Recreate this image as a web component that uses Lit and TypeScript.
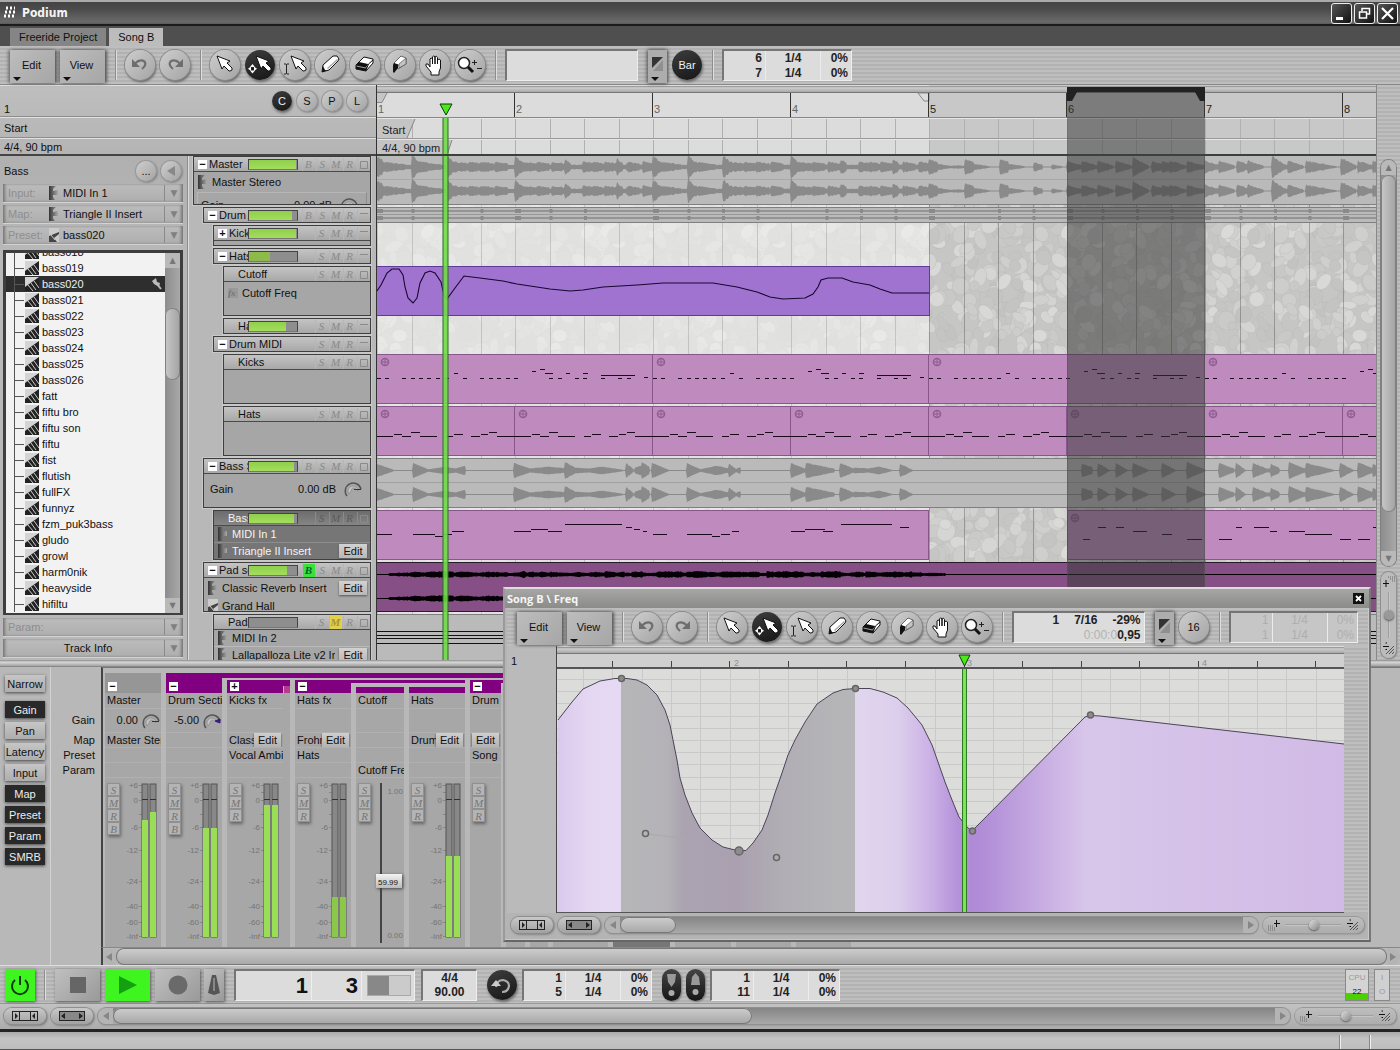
import { LitElement, html, css, svg, nothing } from "lit";
import { customElement, property } from "lit/decorators.js";
import { classMap } from "lit/directives/class-map.js";

const shared = css`
  * { box-sizing: border-box; }
  :host {
    font-family: "Liberation Sans", Arial, sans-serif;
    font-size: 11px;
    line-height: 14px;
    color: #101010;
    cursor: default;
  }
  button, select, input { font: inherit; color: inherit; margin: 0; padding: 0; border: 0; background: none; border-radius: 0; }
  svg { display: block; }
  .brushed { background: repeating-linear-gradient(180deg, #bebebe 0 2px, #b2b2b2 2px 4px); }
  .round {
    flex: none; width: 30px; height: 30px; border-radius: 50%;
    background: linear-gradient(135deg, #cecece, #a4a4a4);
    box-shadow: 0 0 0 1px #8a8a8a, 1px 2px 3px #555;
    display: flex; align-items: center; justify-content: center;
  }
  .round.small { width: 20px; height: 20px; box-shadow: 0 0 0 1px #999, 1px 1px 3px #555; }
  .round.dark { background: linear-gradient(160deg, #3d3d3d, #161616); color: #f2f2f2; box-shadow: 1px 2px 3px #666; }
  .lcd {
    display: grid; background: #dcdcdc; border: 1px solid #eee;
    border-top: 2px solid #757575; border-left: 2px solid #757575;
    font-weight: bold; font-size: 12px; line-height: 14px; color: #222;
  }
`;

const noise = (seed: number) => {
  let s = seed;
  return () => {
    s = (s * 16807) % 2147483647;
    return s / 2147483647;
  };
};
const pts = (list: number[][]) => list.map((p) => p.join(",")).join(" ");

/* ---------- tool icons, all on a 30 by 30 field ---------- */
const pointer = (dx: number) => svg`<path transform="translate(${dx} 0)" d="M7 6 L20 11 L17 13 L22 18 L22 20 L20 21 L19 21 L14 16 L12 19 Z" fill="#fff" stroke="#111" stroke-linejoin="round"/>`;
const icons: Record<string, unknown> = {
  undo: svg`<path d="M7 9 V17 H15 Z" fill="#6e6e6e"/><path d="M10 13.500 Q15 8.500 19.500 11.500 Q22 15 17 19" fill="none" stroke="#6e6e6e" stroke-width="2.200"/>`,
  redo: svg`<path d="M23 9 V17 H15 Z" fill="#6e6e6e"/><path d="M20 13.500 Q15 8.500 10.500 11.500 Q8 15 13 19" fill="none" stroke="#6e6e6e" stroke-width="2.200"/>`,
  select: pointer(0),
  move: svg`${pointer(4)}<path d="M7.5 14 L10 17 H5 Z M7.5 23.5 L10 20.5 H5 Z M3 18.7 L6 16.5 V21 Z M12 18.7 L9 16.5 V21 Z" fill="#fff"/><rect x="6.5" y="17.7" width="2" height="2" fill="#111"/>`,
  text: svg`${pointer(4)}<path d="M4 14 H6 L6.5 14.5 L7 14 H9 M4 24 H6 L6.5 23.5 L7 24 H9 M6.5 14.5 V23.5" fill="none" stroke="#222"/>`,
  pencil: svg`<path d="M7 22 L8 15 L18 6 L22 6 L24 9 L23 11 L14 20 Z" fill="#fff" stroke="#111" stroke-linejoin="round"/><path d="M7 22 L8 16 L10 20 L13 20 Z" fill="#111"/><path d="M12.500 18.500 L22.500 9.500" stroke="#a8a8a8" stroke-width="1.500"/>`,
  eraser: svg`<path d="M6 15 L14 7 L23 9 L23 13 L16 21 L6 19 Z" fill="#fff" stroke="#111" stroke-linejoin="round"/><path d="M6 15 L9 12 L18 14 L16 21 L6 19 Z" fill="#111"/><path d="M6.500 16 L15.500 18 L19 14" fill="none" stroke="#ccc" stroke-width=".8"/><path d="M16 20 L18.500 14 L23 10" fill="none" stroke="#111"/>`,
  marker: svg`<path d="M9 13 L16 6 L21 8 L21 14 L13 19 Z" fill="#fff" stroke="#666" stroke-linejoin="round"/><path d="M14 14 L21 8 V14 L14 18 Z" fill="#c4c4c4" stroke="#555" stroke-width=".7"/><path d="M9 13 L13.500 14.500 L13 18 L9 23 L8 22 L8 15 Z" fill="#111"/>`,
  hand: svg`<path d="M11 25 V22 L6 16 Q5 13 8 14 L10 17 V9 Q11 7 12.500 9 V14 V7 Q13.500 4.500 15 7 V14 V7 Q16.500 5 17.500 7.500 V14 V10 Q19 8 20.500 10 V18 L19 22 V25 Z" fill="#fff" stroke="#111" stroke-linejoin="round"/>`,
  zoom: svg`<circle cx="9" cy="13" r="5.500" fill="#fff" stroke="#222" stroke-width="1.500"/><path d="M13 17 L18 22" stroke="#111" stroke-width="3"/><path d="M17 12.500 H22 M19.500 10 V15 M22 18.500 H27" stroke="#222" fill="none"/>`,
};
const icon = (name: string) => html`<svg width="30" height="30" viewBox="0 0 30 30" aria-hidden="true">${icons[name]}</svg>`;

@customElement("pod-toolbar")
class PodToolbar extends LitElement {
  @property() variant = "main";
  static styles = [shared, css`
    :host { display: block; }
    .bar { display: flex; align-items: center; height: 38px; padding: 0 10px; }
    .menu {
      position: relative; flex: none; width: 45px; height: 33px; margin: 3px 5px 0 0; padding: 0 2px 4px 0;
      background: linear-gradient(135deg, #bdbdbd, #a6a6a6); box-shadow: 2px 0 3px #555, -2px 0 3px #777;
    }
    .menu::after, .snap::after {
      content: ""; position: absolute; left: 3px; bottom: 2px;
      border: 4px solid transparent; border-top-color: #111; border-bottom: 0;
    }
    .sep { flex: none; width: 2px; height: 30px; background: linear-gradient(90deg, #8d8d8d 50%, #dedede 50%); margin: 0 8px 0 10px; }
    .sep.first { margin-left: 5px; }
    .tools { display: flex; gap: 5px; }
    .readout { width: 133px; height: 32px; }
    .snap { position: relative; flex: none; width: 19px; height: 33px; margin: 3px 5px 0 10px; background: #adadad; box-shadow: 1px 0 3px #555, -1px 0 4px #555; }
    .snap svg { margin: 3px auto 9px; }
    .lcd.time { width: 130px; height: 32px; grid-template-columns: 41px 56px 1fr; }
    .lcd.time span { text-align: right; padding-right: 3px; }
    .lcd.time span:nth-child(3n + 2) { text-align: center; border: solid #ececec; border-width: 0 1px; padding: 0; }
    .lcd.pos { width: 133px; grid-template-columns: 1fr auto auto; text-align: right; height: 32px; column-gap: 15px; padding-right: 3px; }
    .lcd.off { background: #c6c6c6; color: #aeaeae; font-weight: normal; }
    .clock { grid-column: 1 / -1; }
    .clock i { font-style: normal; font-weight: normal; color: #b2b2b2; }
  `];
  render() {
    const main = this.variant === "main";
    const tools = ["select", "move", "text", "pencil", "eraser", "marker", "hand", "zoom"];
    return html`<div class="bar brushed">
      <button class="menu">Edit</button><button class="menu">View</button><i class="sep first"></i>
      <div class="tools">${["undo", "redo"].map((n) => html`<button class="round" aria-label=${n}>${icon(n)}</button>`)}</div>
      <i class="sep"></i>
      <div class="tools">${tools.map((n) => html`<button class=${classMap({ round: true, dark: n === "move" })} aria-label=${n}>${icon(n)}</button>`)}</div>
      <i class="sep"></i>
      ${main
        ? html`<div class="lcd readout"></div>`
        : html`<div class="lcd pos"><span>1</span><span>7/16</span><span>-29%</span><span class="clock"><i>0:00:0</i>0,95</span></div>`}
      <button class="snap" aria-label="Snap"><svg width="11" height="14"><path d="M0 0 H11 L0 11 Z" fill="#333"/><path d="M11 3 V14 H1 Z" fill="#8f8f8f"/></svg></button>
      <button class=${classMap({ round: true, dark: main })}>${main ? "Bar" : "16"}</button>
      <i class="sep"></i>
      <div class=${classMap({ lcd: true, time: true, off: !main })}>
        <span>${main ? 6 : 1}</span><span>1/4</span><span>0%</span>
        <span>${main ? 7 : 1}</span><span>1/4</span><span>0%</span>
      </div>
    </div>`;
  }
}

/* ---------- scroll bar with fit buttons and zoom slider ---------- */
@customElement("pod-scroll")
class PodScroll extends LitElement {
  @property({ type: Number }) start = 0;
  @property({ type: Number }) size = 100;
  @property({ type: Boolean }) plain = false;
  static styles = [shared, css`
    :host { display: block; }
    .row { display: flex; align-items: center; gap: 5px; padding: 3px 4px; }
    .pill {
      flex: none; width: 42px; height: 16px; border-radius: 8px; background: linear-gradient(#c8c8c8, #a2a2a2);
      box-shadow: 0 0 0 1px #8e8e8e, 1px 1px 3px #555; display: flex; align-items: center; justify-content: center;
    }
    .track {
      flex: 1; display: flex; align-items: center; height: 16px; border-radius: 8px; min-width: 0;
      background: linear-gradient(#858585, #a9a9a9); box-shadow: 0 0 0 1px #909090, 0 1px 2px #777;
    }
    .end { flex: none; width: 15px; height: 16px; background: #b4b4b4; border-radius: 8px 0 0 8px; padding: 4px 5px; }
    .end.right { border-radius: 0 8px 8px 0; }
    .lane { flex: 1; display: flex; height: 16px; }
    .thumb { border-radius: 8px; background: linear-gradient(#cecece, #a6a6a6); box-shadow: inset 0 0 0 1px #777; }
    .zoom { flex: none; width: 101px; height: 16px; border-radius: 8px; display: flex; align-items: center; gap: 6px; padding: 0 5px;
      background: linear-gradient(#bebebe, #adadad); box-shadow: 0 0 0 1px #999, 1px 1px 2px #777; }
    input { appearance: none; flex: 1; min-width: 0; height: 16px; background: linear-gradient(#8d8d8d, #d8d8d8) center / 100% 2px no-repeat; }
    input::-webkit-slider-thumb { appearance: none; width: 10px; height: 10px; border-radius: 50%; background: linear-gradient(135deg, #ddd, #888); box-shadow: 0 1px 2px #555; }
    .plain .row { padding: 0; }
    .plain .track { border-radius: 0; background: #b8b8b8; height: 17px; box-shadow: none; }
    .plain .thumb, .plain .lane { height: 17px; }
    .plain .end { width: 13px; padding: 4px 3px; }
  `];
  render() {
    const arrow = (left: boolean) => html`<svg width="6" height="8"><path d=${left ? "M6 0 V8 L0 4 Z" : "M0 0 V8 L6 4 Z"} fill="#868686"/></svg>`;
    const fit = (wide: boolean) => html`<svg width="26" height="10"><rect x=".5" y=".5" width="25" height="9" fill=${wide ? "#888" : "none"} stroke="#222"/>${wide
      ? svg`<path d="M6 2 V8 L2 5 Z M20 2 V8 L24 5 Z" fill="#222"/>`
      : svg`<path d="M3 2 V8 L6 5 Z M23 2 V8 L20 5 Z" fill="#222"/><path d="M7.500 0 V10 M18.500 0 V10" stroke="#222"/>`}</svg>`;
    return html`<div class=${this.plain ? "plain" : ""}><div class="row">
      ${this.plain ? nothing : html`<button class="pill" aria-label="Fit selection">${fit(false)}</button><button class="pill" aria-label="Fit all">${fit(true)}</button>`}
      <div class="track" role="scrollbar" aria-label="Horizontal">
        <span class="end">${arrow(true)}</span>
        <span class="lane"><span class="thumb" style=${`margin-left:${this.start}%;width:${this.size}%`}></span></span>
        <span class="end right">${arrow(false)}</span>
      </div>
      ${this.plain ? nothing : html`<div class="zoom">
        <svg width="12" height="12"><path d="M6 4.500 H12 M8.500 1 V8" stroke="#111"/><path d="M0 11 H7 M0 9 H7 M0 7 H5" stroke="#666" stroke-dasharray="1 1"/></svg>
        <input type="range" aria-label="Horizontal zoom" value="50">
        <svg width="12" height="12"><path d="M0 4.500 H6" stroke="#111"/><path d="M2.500 1 H4 M2.500 7.500 H4" stroke="#111"/><path d="M3 11 L11 3 M6 11 L11 6 M9 11 L11 9" stroke="#555"/></svg>
      </div>`}
    </div></div>`;
  }
}

/* ---------- timeline data ---------- */
const BAR = 138;
const BEAT = 34.5;
const TIMELINE = 2000;

type Seg = [number, number, number, number];
const wave = (segs: Seg[], cy: number, seed: number, until: number, rough = 0.28) => {
  const r = noise(seed);
  const top: number[][] = [];
  const bottom: number[][] = [];
  for (let x = 0; x <= until; x++) {
    let a = 0.5;
    for (const [s, len, a0, a1] of segs) {
      if (x >= s && x <= s + len) a = Math.max(a, a0 + ((a1 - a0) * (x - s)) / len);
    }
    const k = a <= 0.5 ? 1 : 1 - rough + rough * r();
    top.push([x, +(cy - a * k).toFixed(1)]);
    bottom.unshift([x, +(cy + a * k).toFixed(1)]);
  }
  return pts([...top, ...bottom]);
};

const masterSegs: Seg[] = [[0, 552, 2.5, 2.5]];
for (const off of [0, 276]) {
  for (const h of [0, 35, 70, 138]) masterSegs.push([off + h, 5, 13, 8], [off + h, 28, 7, 3]);
  for (const h of [92, 104, 118, 160, 175, 206, 216, 228, 250, 266]) masterSegs.push([off + h, 12, 6, 4]);
  for (const h of [188, 240]) masterSegs.push([off + h, 5, 9, 5]);
}
for (const h of [552, 588, 623]) masterSegs.push([h, 8, 9, 6], [h, 24, 5, 1]);
masterSegs.push([657, 8, 5, 3], [675, 10, 3, 1], [576, 20, 2, 1]);
for (const h of [690, 705, 721, 739, 756, 775, 785, 793, 810, 828, 842, 860, 871, 895, 911, 929, 964, 981, 996]) masterSegs.push([h, 15, h === 756 || h === 895 || h === 964 ? 11 : 7, 2]);
masterSegs.push([810, 18, 6, 2], [929, 30, 7, 1], [895, 5, 12, 10]);

const bassSegs: Seg[] = [
  [0, 16, 7, 1], [36, 16, 8, 1], [50, 18, 1, 4], [68, 18, 4, 1], [78, 10, 2, 5],
  [137, 16, 8, 2], [152, 20, 2, 4], [172, 20, 4, 2], [188, 12, 9, 2], [200, 14, 3, 2], [212, 12, 2, 4], [225, 20, 4, 1],
  [249, 7, 8, 2], [258, 6, 3, 5], [265, 7, 9, 4], [275, 16, 8, 1],
  [310, 14, 8, 1], [322, 18, 1, 5], [340, 12, 5, 2], [352, 8, 7, 1], [358, 5, 1, 4], [414, 14, 8, 2], [429, 28, 8, 2],
  [463, 14, 8, 2], [477, 34, 3, 1], [490, 12, 2, 4], [502, 12, 4, 1], [523, 12, 7, 1],
  [705, 10, 7, 4], [721, 11, 8, 1], [739, 11, 8, 1], [756, 15, 8, 1], [785, 13, 8, 1], [810, 18, 9, 1],
  [842, 15, 8, 2], [859, 9, 8, 1], [876, 14, 8, 2], [888, 14, 2, 2], [894, 8, 7, 3], [912, 16, 9, 2], [929, 27, 8, 1], [963, 13, 8, 1], [981, 15, 9, 2], [996, 8, 7, 2],
];
const padSegs: Seg[] = [];
{
  const r = noise(77);
  for (let x = 12; x < 552; x += 9) padSegs.push([x, 10, 1.5 + 2.4 * r(), 1.5 + 2.4 * r()]);
  padSegs.push([552, 16, 2, 1.5]);
}

const kickNotes: number[][] = [
  ...[0, 8, 25, 34, 42, 50, 59, 68, 86, 103, 112, 120, 129, 137, 172, 181, 198, 206, 224, 241, 250].map((x) => [x, x + 4, 222]),
  [77, 81, 217], [155, 159, 215], [163, 168, 213], [168, 176, 217], [189, 193, 217], [206, 211, 217], [224, 258, 219], [267, 271, 221],
];
const hatNotes = [[0, 16, 280], [17, 25, 278], [25, 34, 280], [34, 43, 276], [43, 60, 280], [69, 76, 280], [77, 86, 278], [94, 103, 280], [104, 111, 278], [112, 120, 276], [120, 138, 280]];
const bassNotes = [
  [0, 15, 378], [36, 58, 378], [58, 66, 380], [66, 75, 378], [75, 87, 375], [137, 154, 375], [154, 171, 373], [171, 185, 375], [188, 245, 368], [249, 255, 371], [257, 263, 373], [266, 270, 375],
  [276, 290, 378], [310, 335, 378], [335, 343, 380], [344, 353, 378], [355, 362, 375], [414, 428, 375], [428, 448, 373], [446, 456, 375], [464, 515, 368], [523, 532, 371],
  [706, 713, 383], [721, 729, 371], [739, 747, 371], [756, 770, 375], [785, 795, 378], [810, 825, 383], [842, 855, 383], [859, 865, 371], [877, 892, 371], [893, 900, 375],
  [912, 928, 375], [928, 955, 378], [963, 974, 383], [981, 993, 383], [996, 1004, 371],
];
const automation = [
  [0, 291], [4, 285], [10, 273], [15, 269], [22, 269], [26, 275], [28, 287], [31, 298], [36, 303], [40, 298], [43, 283], [48, 273], [53, 271], [58, 273], [64, 282], [67, 295], [70, 299],
  [78, 288], [87, 276], [103, 278], [126, 281], [140, 284], [173, 289], [193, 291], [206, 290], [226, 287], [260, 285], [286, 283], [336, 283], [360, 287], [380, 292], [393, 297], [406, 299], [428, 298], [436, 294], [441, 287], [444, 280],
  [451, 278], [465, 278], [476, 282], [493, 285], [503, 289], [515, 293], [552, 293],
].map(([x, y]) => [x, y - 156]);

/* ---------- track list ---------- */
interface Track {
  name: string; level: number; h: number; toggle?: string; meter?: number; smrb?: string; on?: string; end?: string; dark?: boolean; fade?: boolean;
  rows?: unknown;
}
const knob = (big = true) => html`<svg width="20" height="18" viewBox="0 0 20 18"><path d="M4 16 A8 8 0 1 1 18 9" fill="none" stroke="#555" stroke-width="1.500"/><path d="M6 14 A5 5 0 1 1 15 11 L13 9 Q9 6 8 11 Z" fill="#c4c4c4" stroke="#888" stroke-width=".7"/><path d=${big ? "M11 9.500 H18" : "M13 9 L18 7 V11 Z"} fill="#3a1b80" stroke=${big ? "#333" : "#3a1b80"}/></svg>`;
const plug = html`<svg width="10" height="14"><defs><linearGradient id="pg"><stop stop-color="#333"/><stop offset="1" stop-color="#aaa"/></linearGradient></defs><path d="M0 0 H7 L4 3 L4 5 L9 4 L9 9 L4 9 L4 11 L6 14 H0 Z" fill="url(#pg)"/></svg>`;
const presetIcon = html`<svg width="14" height="14"><rect width="14" height="14" fill="#d4d4d4"/><path d="M0 14 V10 L14 0 V14 Z" fill="#222"/><path d="M3 8 L8 14 M6 6 L11 13 M9 4 L14 11" stroke="#ccc" stroke-width="1"/></svg>`;
const presetIconSmall = html`<svg width="10" height="14"><rect width="10" height="14" fill="#ccc"/><path d="M0 14 V8 L10 4 V6 L5 10 L8 14 Z" fill="#444"/><path d="M2 7 L6 12" stroke="#ccc"/></svg>`;

const tracks: Track[] = [
  { name: "Master", level: 0, h: 49, toggle: "−", meter: 97, smrb: "BSMR", rows: html`<p class="slot">${plug}<span>Master Stereo</span></p><p class="gain cut"><span>Gain</span><b>0.00 dB</b>${knob()}</p>` },
  { name: "Drum S", level: 1, h: 16, toggle: "−", meter: 90, smrb: "BSMR", end: "flat" },
  { name: "Kick", level: 2, h: 21, toggle: "+", meter: 98, smrb: "SMR", end: "flat", rows: html`<i></i>` },
  { name: "Hats", level: 2, h: 16, toggle: "−", meter: 44, smrb: "SMR", end: "flat", fade: true },
  { name: "Cutoff", level: 3, h: 50, smrb: "SMR", rows: html`<p class="slot"><em>fx</em><span>Cutoff Freq</span></p>` },
  { name: "Ha", level: 3, h: 16, meter: 78, smrb: "SMR", end: "flat" },
  { name: "Drum MIDI", level: 2, h: 16, toggle: "−", smrb: "SMR", end: "flat" },
  { name: "Kicks", level: 3, h: 50, smrb: "SMR", rows: html`<i></i>` },
  { name: "Hats", level: 3, h: 50, smrb: "SMR", rows: html`<i></i>` },
  { name: "Bass S", level: 1, h: 50, toggle: "−", meter: 93, smrb: "BSMR", rows: html`<p class="gain"><span>Gain</span><b>0.00 dB</b>${knob()}</p>` },
  { name: "Bass", level: 2, h: 50, meter: 93, smrb: "SMR", dark: true, rows: html`<p class="slot">${plug}<span>MIDI In 1</span></p><p class="slot">${plug}<span>Triangle II Insert</span><button>Edit</button></p>` },
  { name: "Pad se", level: 1, h: 50, toggle: "−", meter: 80, smrb: "BSMR", on: "B", rows: html`<p class="slot">${plug}<span>Classic Reverb Insert</span><button>Edit</button></p><p class="slot">${presetIconSmall}<span>Grand Hall</span></p>` },
  { name: "Pads", level: 2, h: 50, meter: 0, smrb: "SMR", on: "M", rows: html`<p class="slot">${plug}<span>MIDI In 2</span></p><p class="slot">${plug}<span>Lallapalloza Lite v2 Ins</span><button>Edit</button></p>` },
];

@customElement("pod-tracks")
class PodTracks extends LitElement {
  static styles = [shared, css`
    :host { display: block; overflow: hidden; min-height: 0; }
    .list { display: flex; flex-direction: column; gap: 2px; padding: 0 5px 0 5px; border-left: 1px solid #8c8c8c; box-shadow: inset 1px 0 #ddd; }
    .track { flex: none; display: flex; flex-direction: column; border: 1px solid #3e3e3e; background: #a6a6a6; box-shadow: 0 0 0 1px #c8c8c8; overflow: hidden; position: relative; }
    .l1 { margin-left: 10px; } .l2 { margin-left: 20px; } .l3 { margin-left: 30px; }
    .head { flex: none; display: flex; align-items: center; height: 14px; background: linear-gradient(#c4c4c4, #a8a8a8); }
    .body { border-top: 1px solid #4a4a4a; flex: 1; }
    .toggle { flex: none; width: 9px; height: 9px; margin: 0 2px 0 4px; background: #fff; font-size: 11px; line-height: 9px; font-weight: bold; }
    .name { flex: 1; overflow: hidden; white-space: nowrap; min-width: 0; }
    .indent { padding-left: 14px; }
    .meter { flex: none; width: 50px; height: 11px; border: 1px solid #444; border-bottom-color: #777; background: #8e8e8e; margin-right: 3px; }
    .meter i { display: block; height: 9px; background: linear-gradient(#8fd04a, #a4dd5c); }
    .fade i { background: #8dba4a; }
    .flags { flex: none; display: flex; justify-content: flex-end; width: 69px; font: italic 11px/13px "Liberation Serif", serif; color: #8a8a8a; text-align: center; }
    .flags button { width: 13px; height: 13px; margin-left: 1px; box-shadow: inset 1px 0 #b6b6b6; }
    .flags svg { margin: 3px; }
    .flags .B { background: #3be03b; color: #063; font-weight: bold; }
    .flags .M { background: #e2d04c; color: #a79432; font-weight: bold; }
    p { margin: 0; display: flex; align-items: center; white-space: nowrap; }
    .slot { height: 16px; padding: 0 3px 0 4px; gap: 4px; overflow: hidden; }
    .l0 .slot { height: 20px; }
    .l3 .slot { height: 22px; }
    .l1 .slot:first-child { height: 20px; }
    .l2 .slot { height: 17px; border-bottom: 1px solid #bababa; }
    .slot span { flex: 1; overflow: hidden; }
    .slot em { width: 10px; font: italic bold 9px "Liberation Serif", serif; color: #777; background: #999; }
    .slot button { flex: none; width: 28px; height: 14px; background: linear-gradient(#d2d2d2, #b8b8b8); box-shadow: 0 1px 2px #555; }
    .gain { height: 30px; padding: 0 7px 0 6px; }
    .gain span { flex: 1; } .gain b { font-weight: normal; margin-right: 7px; }
    .cut { height: 17px; margin: 0 3px; padding-top: 9px; padding-left: 3px; border: 1px solid #b6b6b6; border-right-color: #8e8e8e; }
    .dark { background: #767676; color: #f4f4f4; }
    .dark .head { background: linear-gradient(#6c6c6c, #858585); }
    .dark .slot { border-color: #8d8d8d; }
    .dark .slot button { color: #111; }
    .dark .flags { color: #5a5a5a; }
    .dark .flags button { box-shadow: inset 1px 0 #8a8a8a; }
  `];
  render() {
    return html`<div class="list">${tracks.map((t) => html`
      <section class=${classMap({ track: true, ["l" + t.level]: true, dark: !!t.dark, fade: !!t.fade })} style=${`height:${t.h}px`}>
        <div class="head">
          ${t.toggle ? html`<button class="toggle">${t.toggle}</button>` : nothing}
          <span class=${classMap({ name: true, indent: !t.toggle })}>${t.name}</span>
          ${t.meter !== undefined ? html`<div class="meter"><i style=${`width:${t.meter}%`}></i></div>` : nothing}
          <div class="flags">${[...(t.smrb ?? "")].map((f) => html`<button class=${t.on === f ? f : ""}>${f}</button>`)}
            <button aria-label="Size"><svg width="8" height="8"><path d=${t.end ? "M0 1.500 H8" : "M.5 .5 H7.500 V7.500 H.5 Z"} fill="none" stroke="#8a8a8a"/></svg></button></div>
        </div>
        ${t.rows ? html`<div class="body">${t.rows}</div>` : nothing}
      </section>`)}</div>`;
  }
}

/* ---------- timeline ---------- */
@customElement("pod-timeline")
class PodTimeline extends LitElement {
  static styles = [shared, css`
    :host { display: grid; grid-template-rows: 71px minmax(0, 1fr); min-width: 0; border-left: 1px solid #333; overflow: hidden; }
    svg { width: 100%; height: 100%; min-height: 0; overflow: hidden; }
    text { font-size: 11px; fill: #222; }
    .faint { fill: #666; }
  `];
  ruler() {
    const bars = [...Array(14).keys()];
    const beats = [...Array(56).keys()];
    return html`<svg>
      <defs><linearGradient id="strip" x2="0" y2="1"><stop stop-color="#8a8a8a"/><stop offset=".3" stop-color="#cdcdcd"/><stop offset="1" stop-color="#a8a8a8"/></linearGradient></defs>
      <rect width="100%" height="71" fill="#c8c8c8"/><rect width=${BAR * 4} height="71" fill="#dcdcdc"/>
      <rect y="1" width="100%" height="6" fill="url(#strip)"/><rect y="7" width="100%" height="1" fill="#777"/>
      ${beats.map((b) => svg`<path d="M${Math.round(b * BEAT) + 0.5} 34 V69" stroke="#b0b0b0"/>`)}
      <path d="M0 8 H10 L5 17 H0 Z" fill="#c6c6c6"/><path d="M0 17.500 H5 L10 8" fill="none" stroke="#888"/>
      <path d="M541 8 L547 16 H552 V8 Z" fill="#dcdcdc" stroke="#888"/>
      <path d="M0 34 H38 L30 53 H0 Z" fill="#c4c4c4"/><path d="M38 34 L30 53" stroke="#888"/>
      <path d="M0 55 H75 L70 70 H0 Z" fill="#c4c4c4"/><path d="M75 55 L70 70" stroke="#888"/>
      <rect y="32" width="100%" height="1" fill="#888"/><rect y="33" width="100%" height="1" fill="#e6e6e6"/>
      <rect y="53" width="100%" height="1" fill="#999"/><rect y="54" width="100%" height="1" fill="#e6e6e6"/>
      ${bars.map((b) => svg`${b ? svg`<path d="M${b * BAR - 0.5} 8 V32" stroke="#333"/>` : nothing}<text x=${b * BAR + 1} y="28" class=${b < 4 ? "faint" : ""}>${b + 1}</text>`)}
      <rect x="690" y="2" width="138" height="69" fill="#373737" fill-opacity=".525"/>
      <path d="M690 2 H828 V16 H823 L818 7 H700 L695 16 H690 Z" fill="#222"/>
      <rect x="66" y="33" width="5" height="38" fill="#7ad957"/><path d="M66 33 V71 M71 33 V71" stroke="#2f6b22"/>
      <path d="M63 19 H75 L69 30 Z" fill="#4be81c" stroke="#0c3c06"/>
      <text x="5" y="49">Start</text><text x="5" y="67">4/4, 90 bpm</text>
      <rect y="69" width="100%" height="2" fill="#3a403a"/>
    </svg>`;
  }
  pebbles() {
    const r = noise(4211);
    const out = [];
    for (let i = 0; i < 260; i++) {
      const x = r() * 160, y = r() * 160, a = 4 + r() * 6, b = 4 + r() * 5, rot = r() * 180, g = Math.round(194 + r() * 24);
      for (const dx of [0, -160, 160]) for (const dy of [0, -160, 160]) {
        if (x + dx < -14 || x + dx > 174 || y + dy < -14 || y + dy > 174) continue;
        out.push(svg`<ellipse rx=${a.toFixed(1)} ry=${b.toFixed(1)} transform="translate(${(x + dx).toFixed(1)} ${(y + dy).toFixed(1)}) rotate(${rot.toFixed(0)})" fill="rgb(${g},${g},${g - 1})" stroke="#b4b4b4" stroke-width=".8" stroke-opacity=".4"/>`);
      }
    }
    return out;
  }
  clip(x: number, y: number, w: number, h: number, fill: string, line: string) {
    return svg`<rect x=${x + 0.5} y=${y + 0.5} width=${w - 1} height=${h - 1} fill=${fill} stroke=${line}/>`;
  }
  notes(list: number[][], off = 0) {
    return svg`<path d=${list.map(([a, b, y]) => `M${a + off} ${y + 0.5}H${b + off}`).join("")} stroke="#1a0a1a"/>`;
  }
  badge(x: number, y: number) {
    return svg`<circle cx=${x + 8} cy=${y + 8} r="3.500" fill="none" stroke="#8f5f92" stroke-width="1.600"/><path d="M${x + 5} ${y + 8} H${x + 11} M${x + 8} ${y + 5} V${y + 11}" stroke="#8f5f92"/>`;
  }
  lanes() {
    const pink = "#bf8bbf", edge = "#87568a", grey = "#bababa", greyEdge = "#7f7f7f", ink = "#8a8a8a";
    const ticks = [...Array(29).keys()];
    return html`<svg>
      <defs><pattern id="stones" width="160" height="160" patternUnits="userSpaceOnUse"><rect width="160" height="160" fill="#c6c6c4"/>${this.pebbles()}</pattern></defs>
      <rect width="100%" height="100%" fill="url(#stones)"/><rect width="552" height="100%" fill="#f4f4f2" fill-opacity=".6"/>
      ${ticks.map((b) => svg`<path d="M${Math.round(b * BEAT) + 0.5} 0 V600" stroke="#555" stroke-opacity=${b < 16 ? 0.22 : 0.42}/>`)}
      ${this.clip(-1, -1, TIMELINE, 50, grey, greyEdge)}<path d="M0 23.500 H${TIMELINE}" stroke="#a8a8a8"/>
      <polygon points=${wave(masterSegs, 11, 9, 1010)} fill=${ink}/><polygon points=${wave(masterSegs, 35, 9, 1010)} fill=${ink}/>
      ${this.clip(-1, 51, TIMELINE, 16, grey, greyEdge)}
      <path d="M0 55 H${TIMELINE} M0 62 H${TIMELINE}" stroke="#888" stroke-width="1.500"/><path d="M0 58.500 H${TIMELINE}" stroke="#999"/>
      ${ticks.filter((b) => b % 5 !== 2 || b > 18).map((b) => svg`<path d="M${b * BEAT} 55 h${b % 4 ? 3 : 6} M${b * BEAT} 62 h${b % 4 ? 3 : 6}" stroke=${ink} stroke-width="4"/>`)}
      ${this.clip(-1, 110, 554, 50, "#a073d0", "#603a98")}
      <polyline points=${pts(automation)} fill="none" stroke="#180830" stroke-width="1.100"/>
      ${[0, 2, 4, 6].map((b) => svg`${this.clip(b * BAR - 1, 198, BAR * 2 + 1, 50, pink, edge)}${this.badge(b * BAR, 198)}`)}
      ${[0, 276, 552, 828].map((o) => this.notes(kickNotes, o))}
      ${[0, 1, 2, 3, 4, 5, 6, 7].map((b) => svg`${this.clip(b * BAR - 1, 250, BAR + 1, 50, pink, edge)}${this.badge(b * BAR, 250)}`)}
      ${[0, 1, 2, 3, 4, 5, 6, 7].map((b) => this.notes(hatNotes, b * BAR))}
      ${this.clip(-1, 302, TIMELINE, 50, grey, greyEdge)}<path d="M0 326.500 H${TIMELINE}" stroke="#a0a0a0"/>
      <polygon points=${wave(bassSegs, 314.5, 31, 1010, 0.12)} fill=${ink}/><polygon points=${wave(bassSegs, 338.5, 31, 1010, 0.12)} fill=${ink}/>
      ${this.clip(-1, 354, 553, 50, pink, edge)}
      ${this.clip(690, 354, 140, 50, pink, edge)}${this.clip(828, 354, 1200, 50, pink, pink)}<path d="M828 354.500 H2000 M828 403.500 H2000" stroke=${edge}/>${this.badge(690, 354)}
      ${this.notes(bassNotes)}
      ${this.clip(-1, 406, TIMELINE, 50, "#865086", "#2b1a2b")}
      <polygon points=${wave(padSegs, 418.5, 5, 1010)} fill="#050005"/><polygon points=${wave(padSegs, 442.5, 5, 1010)} fill="#050005"/>
      ${this.clip(-1, 458, TIMELINE, 60, grey, greyEdge)}
      ${[475, 479, 482, 487].map((y) => svg`<path d="M0 ${y + 0.5} H${TIMELINE}" stroke="#111"/>`)}
      <rect x="690" width="138" height="100%" fill="#373737" fill-opacity=".525"/><path d="M690.500 0 V600 M827.500 0 V600" stroke="#555" stroke-opacity=".6"/>
      <rect x="66" width="5" height="100%" fill="#6fdc48" fill-opacity=".9"/><path d="M66 0 V600 M71 0 V600" stroke="#2f6b22"/>
    </svg>`;
  }
  render() { return html`${this.ruler()}${this.lanes()}`; }
}

/* ---------- mixer ---------- */
interface Strip { name?: string; w: number; head: string; toggle?: string; gain?: string; map?: string; preset?: string; param?: string; edit?: boolean; flags?: string; levels?: number[]; dim?: boolean; fader?: boolean; dark?: boolean; }
const strips: Strip[] = [
  { name: "Master", w: 61, head: "master", toggle: "−", gain: "0.00", map: "Master Ster", flags: "SMRB", levels: [36, 28] },
  { name: "Drum Sectic", w: 61, head: "top", toggle: "−", gain: "-5.00", flags: "SMRB", levels: [44, 44] },
  { name: "Kicks fx", w: 68, head: "closed", toggle: "+", map: "Class", preset: "Vocal Ambi", edit: true, flags: "SMR", levels: [21, 21] },
  { name: "Hats fx", w: 61, head: "open", toggle: "−", map: "Frohr", preset: "Hats", edit: true, flags: "SMR", levels: [113, 113], dim: true },
  { name: "Cutoff", w: 53, head: "leaf", param: "Cutoff Fre", flags: "SMR", fader: true },
  { name: "Hats", w: 61, head: "last", map: "Drum", edit: true, flags: "SMR", levels: [72, 72] },
  { name: "Drum", w: 36, head: "open", toggle: "−", preset: "Song", edit: true, flags: "SMR" },
  { w: 24, head: "leaf" }, { w: 23, head: "leaf" }, { w: 60, head: "leaf" }, { w: 62, head: "leaf", dark: true }, { w: 61, head: "leaf" }, { w: 60, head: "leaf" }, { w: 60, head: "leaf" },
];

@customElement("pod-mixer")
class PodMixer extends LitElement {
  static styles = [shared, css`
    :host { display: grid; grid-template-columns: 51px 50px minmax(0, 1fr); grid-template-rows: 280px 18px; background: #b8b8b8; }
    .keys { grid-row: 1 / 3; padding: 8px 5px; display: flex; flex-direction: column; gap: 4px; border-right: 1px solid #d2d2d2; }
    .keys button { height: 17px; background: linear-gradient(#c6c6c6, #adadad); box-shadow: 0 1px 3px #444; }
    .keys button:first-child { margin-bottom: 5px; }
    .keys .on { background: #292929; color: #eee; }
    .labels { grid-row: 1 / 3; text-align: right; padding: 43px 6px 0 0; display: flex; flex-direction: column; }
    .labels span { height: 15px; line-height: 15px; } .labels span:first-child { height: 23px; line-height: 21px; }
    .strips { display: flex; border-left: 2px solid #444; border-top: 1px solid #777; padding-left: 2px; overflow: hidden; }
    .strip { flex: none; display: flex; flex-direction: column; }
    .head { height: 25px; padding-top: 5px; display: flex; flex-direction: column; position: relative; }
    .head i { display: block; background: #800080; flex: none; }
    .head button { position: absolute; left: 3px; top: 14px; width: 9px; height: 9px; background: #fff; font-weight: bold; line-height: 9px; }
    .a { height: 5px; } .b { height: 3px; margin-top: 2px; } .c { height: 13px; margin: 2px 5px 0 0; } .d { height: 6px; margin: 4px 5px 0 0; } .full { height: 20px; margin-right: 5px; }
    .open .d { height: 10px; margin-top: 0; }
    .last .b { margin-right: 5px; }
    .top .full { height: 15px; }
    .master .full { background: #969696; }
    .closed .c { background: linear-gradient(#800080, #800080) 0 0 / 100% 6px no-repeat, linear-gradient(90deg, #800080 56px, #b8b8b8 56px 57px, #b43c8c 57px); }
    .closed .cell { margin-right: 7px; }
    .cells { flex: 1; background: #a7a7a7; margin-right: 5px; display: flex; flex-direction: column; }
    .dark .cells { background: #777; }
    .cell { height: 15px; line-height: 15px; padding-left: 2px; overflow: hidden; white-space: pre; border-bottom: 1px solid #b0b0b0; display: flex; }
    .cell.tall { height: 24px; justify-content: flex-end; align-items: center; gap: 3px; }
    .cell.name { height: 16px; }
    .cell span { overflow: hidden; flex: 1; }
    .cell button { flex: none; width: 27px; height: 14px; line-height: 14px; margin-right: 2px; background: linear-gradient(#cfcfcf, #b3b3b3); box-shadow: 0 1px 2px #444; }
    .bottom { display: flex; padding: 5px 0 0 2px; gap: 5px; }
    .flags { display: flex; flex-direction: column; font: italic 11px/12px "Liberation Serif", serif; color: #777; height: max-content; box-shadow: 1px 2px 3px #666; }
    .flags button { width: 13px; height: 13px; background: #b4b4b4; border: 1px solid #909090; line-height: 10px; }
    text { font-size: 8px; fill: #747474; text-anchor: end; }
    .fader { position: relative; display: flex; }
    .fader input { appearance: none; writing-mode: vertical-lr; direction: rtl; width: 26px; height: 160px; background: linear-gradient(#444, #444) 4px 0 / 2px 100% no-repeat; }
    .fader input::-webkit-slider-thumb { appearance: none; width: 26px; height: 14px; background: linear-gradient(#f4f4f4, #bbb); box-shadow: 1px 1px 3px #444; }
    .fader output { position: absolute; left: 2px; top: 93px; font-size: 8px; }
    .fader svg { position: absolute; left: 10px; top: 0; }
    .scroll { border-left: 2px solid #444; border-top: 1px solid #888; }
  `];
  head(kind: string) {
    switch (kind) {
      case "master": return html`<i class="full"></i>`;
      case "top": return html`<i class="a"></i><i class="full"></i>`;
      case "closed": return html`<i class="a"></i><i class="c"></i>`;
      default: return html`<i class="a"></i><i class="b"></i><i class="d"></i>`;
    }
  }
  scale(s: Strip) {
    const marks: [number, string][] = [[2, "+6"], [9, ""], [17, "0"], [31, ""], [44, "-6"], [67, "-12"], [98, "-24"], [123, "-40"], [139, "-60"], [153, "-Inf"]];
    return html`<svg width="33" height="160">
      ${marks.map(([y, t]) => svg`<text x="13" y=${y + 3}>${t}</text><path d="M14 ${y + 0.5} h3" stroke="#888"/>`)}
      ${[0, 1].map((i) => svg`<rect x=${17 + i * 8} y="1" width="6" height="153" fill="#888" stroke="#555"/>
        <rect x=${17 + i * 8} y=${1 + s.levels![i]} width="6" height=${153 - s.levels![i]} fill=${s.dim ? "#8bc748" : "#9ade58"}/>
        <path d="M${17 + i * 8} 16.500 h6" stroke="#333"/>`)}
    </svg>`;
  }
  render() {
    const keys: [string, boolean][] = [["Narrow", false], ["Gain", true], ["Pan", false], ["Latency", false], ["Input", false], ["Map", true], ["Preset", true], ["Param", true], ["SMRB", true]];
    return html`
      <div class="keys">${keys.map(([k, on]) => html`<button class=${on ? "on" : ""} aria-pressed=${on}>${k}</button>`)}</div>
      <div class="labels"><span>Gain</span><span>Map</span><span>Preset</span><span>Param</span></div>
      <div class="strips">${strips.map((s) => html`<section class=${classMap({ strip: true, dark: !!s.dark, [s.head]: true })} style=${`width:${s.w}px`}>
        <div class="head">${this.head(s.head)}${s.toggle ? html`<button>${s.toggle}</button>` : nothing}</div>
        <div class="cells">
          <div class="cell name"><span>${s.name ?? ""}</span></div>
          <div class="cell tall">${s.gain ? html`${s.gain}${knob(s.gain === "0.00")}` : nothing}</div>
          <div class="cell"><span>${s.map ?? ""}</span>${s.edit ? html`<button>Edit</button>` : nothing}</div>
          <div class="cell"><span>${s.preset ?? ""}</span></div>
          <div class="cell"><span>${s.param ?? ""}</span></div>
          <div class="bottom">
            ${s.flags ? html`<div class="flags">${[...s.flags].map((f) => html`<button>${f}</button>`)}</div>` : nothing}
            ${s.levels ? this.scale(s) : nothing}
            ${s.fader ? html`<div class="fader"><input type="range" aria-label="Cutoff" value="38"><output>59.99</output><svg width="20" height="160"><text x="17" y="11">1.00</text><text x="17" y="155">0.00</text></svg></div>` : nothing}
          </div>
        </div>
      </section>`)}</div>
      <div class="scroll"><pod-scroll plain .start=${0} .size=${100}></pod-scroll></div>`;
  }
}

/* ---------- curve editor window ---------- */
const curve = [
  [558, 720], [572, 702], [583, 689], [600, 681], [615, 678.5], [627, 678.5], [637, 680], [647, 685], [657, 695], [665, 710], [670, 725], [673, 740], [677, 760], [680, 778], [685, 795], [692, 813], [700, 828], [712, 840], [723, 847], [733, 849.5], [738, 850.5], [746, 850.5],
  [753, 843], [762, 830], [768, 815], [775, 793], [782, 773], [788, 755], [795, 740], [805, 722], [817, 704], [833, 693], [843, 689.5], [855, 688.5], [870, 688.5], [883, 692], [897, 698], [908, 708], [922, 725], [932, 745], [938, 762], [945, 782], [952, 800], [959, 817], [967, 827], [972, 831],
  [1085, 717], [1090, 715.5], [1100, 716], [1344, 744], [1900, 805],
].map(([x, y]) => [x - 557, y - 646]);

@customElement("pod-curve-window")
class PodCurveWindow extends LitElement {
  static styles = [shared, css`
    :host { display: block; background: #b4b4b4; border: 2px solid #9a9a9a; border-color: #dcdcdc #777 #666 #9a9a9a; padding: 0 1px 4px 2px; box-shadow: inset -1px -1px #c8c8c8; }
    .title { display: flex; align-items: center; justify-content: space-between; height: 19px; margin: 0 -1px 0 -2px; padding: 0 5px 0 2px; background: linear-gradient(#a6a6a4, #8b8b88);
      font: bold 11px/16px "Open Sans", "Noto Sans", sans-serif; color: #f6f6f6; }
    .close { width: 11px; height: 11px; background: #111; }
    .edit { display: grid; grid-template-columns: 50px minmax(0, 1fr) 24px; margin-bottom: 1px; }
    .gutter { padding: 8px 4px; border-right: 1px solid #444; background: #bababa; }
    .edit svg { width: 100%; height: 267px; }
    text { font-size: 9px; fill: #909090; }
  `];
  render() {
    const line = pts(curve);
    const stops: [number, string][] = [[0, "#d9c8ec"], [30, "#e4d7f2"], [64, "#e6daf3"], [64, "#b6b6b8"], [110, "#b4b2b7"], [125, "#aba4b0"], [180, "#aaa0b0"], [225, "#b0aeb4"], [298, "#b6b6b8"], [298, "#e0d6ec"], [340, "#dccfec"], [370, "#cdb5e6"], [400, "#b593da"], [414, "#b08ad6"], [430, "#b38fd8"], [530, "#d8c6ea"], [786, "#d1bbe6"]];
    const handle = (x: number, y: number, r: number, solid = true) => svg`<circle cx=${x - 556.5} cy=${y - 646} r=${r} fill=${solid ? "#8c8c8c" : "none"} stroke="#666" stroke-width="1.500"/>`;
    return html`
      <div class="title"><span>Song B \\ Freq</span><button class="close" aria-label="Close"><svg width="11" height="11"><path d="M3 3 L8 8 M8 3 L3 8" stroke="#fff" stroke-width="1.800"/></svg></button></div>
      <pod-toolbar variant="edit"></pod-toolbar>
      <div class="edit">
        <div class="gutter">1</div>
        <svg>
          <defs><linearGradient id="fill" gradientUnits="userSpaceOnUse" x1="0" x2="786" y1="0" y2="0">${stops.map(([x, c]) => svg`<stop offset=${x / 786} stop-color=${c}/>`)}</linearGradient>
          <linearGradient id="strip" x2="0" y2="1"><stop stop-color="#8a8a8a"/><stop offset=".3" stop-color="#cdcdcd"/><stop offset="1" stop-color="#a8a8a8"/></linearGradient></defs>
          <rect width="100%" height="267" fill="#dcdcda"/>
          <rect y="1" width="100%" height="6" fill="url(#strip)"/><rect y="7" width="100%" height="1" fill="#777"/><rect y="8" width="100%" height="13" fill="#d0d0d0"/>
          ${[...Array(40).keys()].map((i) => svg`<path d="M${Math.round(26 + i * 29.3) + 0.5} 23 V267" stroke="#c9c9c9"/>`)}
          ${[...Array(20).keys()].map((i) => svg`<path d="M0 ${Math.round(33 + i * 12.2) + 0.5} H2000" stroke="#c9c9c9"/>`)}
          ${[...Array(20).keys()].map((i) => svg`<path d="M${Math.round(55 + i * 58.6) + 0.5} 15 V21" stroke="#444"/>`)}
          <text x="177" y="20">2</text><text x="410" y="20">3</text><text x="645" y="20">4</text>
          <rect y="21" width="100%" height="2" fill="#555"/>
          <polygon points="${line} 1343,267 0,267" fill="url(#fill)"/><polyline points=${line} fill="none" stroke="#4c4458"/>
          <path d="M91 188 L131 193" stroke="#aaa"/>
          ${handle(621, 678.5, 3)}${handle(738.500, 851, 4)}${handle(855, 688.500, 3)}${handle(972, 831, 3)}${handle(1090, 715, 3)}${handle(645, 833.500, 3, false)}${handle(776, 857.500, 3, false)}
          <rect x="405" y="23" width="5" height="244" fill="#7de35a"/><path d="M405.500 23 V267 M409.500 23 V267" stroke="#2f7a22"/>
          <path d="M402 9 H413 L407.500 20 Z" fill="#4be81c" stroke="#0c3c06"/>
          <rect y="266" width="100%" height="1" fill="#555"/>
        </svg>
        <div class="brushed"></div>
      </div>
      <pod-scroll .start=${0} .size=${9}></pod-scroll>`;
  }
}

/* ---------- application shell ---------- */
const presets = ["bass018", "bass019", "bass020", "bass021", "bass022", "bass023", "bass024", "bass025", "bass026", "fatt", "fiftu bro", "fiftu son", "fiftu", "fist", "flutish", "fullFX", "funnyz", "fzm_puk3bass", "gludo", "growl", "harm0nik", "heavyside", "hifiltu"];

@customElement("app-root")
class AppRoot extends LitElement {
  static styles = [shared, css`
    :host { display: flex; flex-direction: column; height: 100vh; position: relative; background: #b8b8b8; overflow: hidden; }
    .title { flex: none; display: flex; align-items: center; gap: 6px; height: 26px; padding: 0 2px 0 3px; border-top: 2px solid #aaa; border-bottom: 2px solid #1c1c1c;
      background: linear-gradient(#444 0, #4a4a4a 30%, #6a6a6a 90%, #5a5a5a); color: #f4f4f4; font: bold 12px/20px "DejaVu Sans Condensed", "DejaVu Sans", sans-serif; }
    .title b { flex: 1; }
    .win { width: 21px; height: 21px; border: 1px solid #eee; border-radius: 3px; background: linear-gradient(135deg, #555, #111); }
    .wins { display: flex; gap: 2px; }
    .tabs { flex: none; display: flex; gap: 3px; height: 20px; padding: 2px 10px 0; background: #4f4f4f; }
    .tabs button { background: #858585; padding: 0 9px; line-height: 16px; }
    .tabs .on { background: #bcbcbc; }
    .arrange { flex: 1; min-height: 0; display: grid; grid-template-columns: 376px minmax(0, 1fr) 24px; border-top: 1px solid #888; }
    .left { display: grid; grid-template-rows: 71px minmax(0, 1fr); min-height: 0; }
    .info { display: grid; grid-template-rows: 32px 21px 18px; background: linear-gradient(#bebebe, #b4b4b4); }
    .info > div { border-bottom: 1px solid #8d8d8d; box-shadow: inset 0 1px #e0e0e0; padding: 2px 0 0 4px; display: flex; align-items: center; }
    .info > div:last-child { border-bottom: 2px solid #444; }
    .info .top { justify-content: space-between; padding: 0 9px 0 4px; }
    .top > span { align-self: flex-end; }
    .modes { display: flex; gap: 5px; }
    .cols { display: grid; grid-template-columns: 187px 1fr; min-height: 0; }
    .insp { display: flex; flex-direction: column; padding: 3px 4px 0 3px; min-height: 0; background: linear-gradient(#b0b0b0, #b8b8b8 20%); }
    .who { display: flex; align-items: center; height: 24px; gap: 5px; padding: 0 2px 0 1px; margin-bottom: 1px; }
    .who span { flex: 1; }
    .field { flex: none; display: flex; align-items: center; height: 19px; margin-bottom: 2px; padding-left: 5px; background: linear-gradient(#bcbcbc, #aeaeae); box-shadow: inset 3px 0 3px -1px #777, inset -3px 0 3px -1px #777; border-bottom: 1px solid #d2d2d2; }
    .field label { width: 41px; color: #8e8e8e; }
    .field select { appearance: none; flex: 1; outline: 0; padding-left: 4px; line-height: 16px; }
    .field b { width: 19px; height: 16px; border-left: 1px solid #8a8a8a; text-align: center; font: 9px/16px "DejaVu Sans", sans-serif; color: #808080; }
    .field.center select { text-align: center; text-align-last: center; }
    .list { flex: 1; min-height: 0; display: flex; border: 3px solid #3e3e3e; border-bottom-width: 2px; background: #f2f2f2; margin: 3px 0; }
    ul { flex: 1; margin: 0; padding: 0 0 1px; list-style: none; display: flex; flex-direction: column; justify-content: flex-end; overflow: hidden; }
    li { flex: none; display: flex; align-items: center; gap: 3px; height: 16px; padding-left: 8px; }
    li span { flex: 1; }
    li::before { content: ""; width: 9px; height: 16px; border-left: 1px solid #555; background: linear-gradient(#555, #555) 0 8px / 9px 1px no-repeat; margin-right: -2px; }
    li.on { background: #2e2e2e; color: #eee; }
    .vbar { display: flex; flex-direction: column; width: 15px; background: linear-gradient(90deg, #8d8d8d, #a8a8a8); }
    .vbar b { flex: none; height: 15px; text-align: center; font: 8px/15px "DejaVu Sans", sans-serif; color: #777; background: #b9b9b9; }
    .vbar i { display: block; border-radius: 7px; background: linear-gradient(90deg, #c8c8c8, #a2a2a2); box-shadow: inset 0 0 0 1px #808080; }
    .rail { display: flex; flex-direction: column; align-items: center; padding-top: 75px; gap: 6px; border-left: 1px solid #888; }
    .rail .vbar { flex: 1; border-radius: 8px; overflow: hidden; box-shadow: 0 0 0 1px #808080; }
    .rail .view { height: 83%; }
    .list .view { height: 72px; margin-top: 40px; }
    .vzoom { flex: none; display: flex; flex-direction: column; align-items: center; gap: 4px; width: 15px; height: 86px; padding: 4px 0; border-radius: 8px; background: #bcbcbc; box-shadow: 0 0 0 1px #909090, 1px 1px 2px #777; margin-bottom: 2px; }
    .vzoom input { appearance: none; writing-mode: vertical-lr; flex: 1; min-height: 0; width: 14px; background: linear-gradient(90deg, #8d8d8d, #d8d8d8) center / 2px 100% no-repeat; }
    .vzoom input::-webkit-slider-thumb { appearance: none; width: 10px; height: 10px; border-radius: 50%; background: #999; box-shadow: 0 1px 2px #555; }
    .split { flex: none; height: 7px; background: linear-gradient(#8a8a8a, #d8d8d8 30%, #a8a8a8 80%, #777); }
    pod-mixer { flex: none; }
    .transport { flex: none; display: flex; align-items: center; height: 39px; padding: 0 10px 0 5px; border-top: 1px solid #ddd; border-bottom: 1px solid #999; }
    .key { flex: none; width: 45px; height: 32px; margin-right: 5px; background: linear-gradient(135deg, #c0c0c0, #999); box-shadow: 1px 1px 3px #555; display: flex; align-items: center; justify-content: center; }
    .key.go { background: #3ff520; }
    .key.power { width: 30px; margin-right: 9px; }
    .key.slim { width: 20px; margin: 0 10px 0 -1px; }
    .sep { flex: none; width: 2px; height: 30px; margin-right: 9px; background: linear-gradient(90deg, #8d8d8d 50%, #dedede 50%); }
    .transport .lcd { flex: none; height: 32px; }
    .count { width: 181px; grid-template-columns: 76px 50px 1fr; font-size: 22px; line-height: 29px; text-align: right; color: #111; margin-right: 6px; }
    .count span { border-right: 1px solid #eee; padding-right: 3px; }
    .lamp { margin: 4px 3px 4px 5px; background: linear-gradient(90deg, #888 50%, #cbcbcb 50%); border: 1px solid #aaa; }
    .tempo { width: 56px; text-align: center; margin-right: 10px; }
    .lcd.time { width: 130px; grid-template-columns: 41px 56px 1fr; margin-right: 10px; margin-left: 5px; }
    .lcd.time span { text-align: right; padding-right: 3px; }
    .lcd.time span:nth-child(3n + 2) { text-align: center; border: solid #ececec; border-width: 0 1px; padding: 0; }
    .capsule + .lcd.time { margin-left: 0; }
    .capsule { flex: none; width: 19px; height: 32px; border-radius: 10px; margin-right: 5px; background: linear-gradient(#444, #161616); box-shadow: 1px 1px 2px #777; display: flex; align-items: center; justify-content: center; }
    .fill { flex: 1; }
    .cpu { width: 24px; height: 32px; border: 1px solid #888; background: linear-gradient(#d4d4d4 75%, #4bd000 75%); font-size: 8px; line-height: 10px; color: #999; text-align: center; display: flex; flex-direction: column; justify-content: space-between; padding: 3px 0; }
    .cpu b { font-weight: normal; color: #111; }
    .io { width: 16px; margin-left: 5px; background: #d0d0d0; }
    .foot { flex: none; height: 25px; padding-top: 1px; background: linear-gradient(#c2c2c2, #acacac); }
    .status { flex: none; display: flex; justify-content: flex-end; height: 21px; border-top: 3px solid #242424; background: linear-gradient(#aaa, #c4c4c4 40%, #bdbdbd); border-bottom: 1px solid #555; }
    .status i { width: 30px; border-left: 1px solid #f0f0f0; box-shadow: -1px 0 #888; margin-top: 3px; }
    .float { position: absolute; left: 503px; top: 587px; right: 29px; }
  `];
  field(label: string, value: string, img: unknown, center = false) {
    return html`<div class=${classMap({ field: true, center })}>${label ? html`<label for=${label}>${label}</label>` : nothing}${img}
      <select id=${label || "trackinfo"} aria-label=${label || value}><option>${value}</option></select><b>▼</b></div>`;
  }
  render() {
    return html`
      <header class="title">
        <svg width="13" height="14"><path d="M3 2 H12 M2 6 H12 M1 10 H11" stroke="#fff" stroke-width="3" stroke-dasharray="2 2"/></svg><b>Podium</b>
        <span class="wins">
          <button class="win" aria-label="Minimize"><svg width="19" height="19"><rect x="4" y="13" width="7" height="3" fill="#fff"/></svg></button>
          <button class="win" aria-label="Restore"><svg width="19" height="19"><path d="M7 7 V4.500 H14.500 V10 H12" fill="none" stroke="#fff" stroke-width="1.500"/><rect x="4.500" y="8" width="7" height="6" fill="none" stroke="#fff" stroke-width="1.500"/></svg></button>
          <button class="win" aria-label="Close"><svg width="19" height="19"><path d="M4 4 L15 15 M15 4 L4 15" stroke="#fff" stroke-width="2.200"/></svg></button>
        </span>
      </header>
      <nav class="tabs"><button>Freeride Project</button><button class="on">Song B</button></nav>
      <pod-toolbar></pod-toolbar>
      <main class="arrange">
        <div class="left">
          <div class="info">
            <div class="top"><span>1</span><div class="modes">${["C", "S", "P", "L"].map((m) => html`<button class=${classMap({ round: true, small: true, dark: m === "C" })}>${m}</button>`)}</div></div>
            <div>Start</div><div>4/4, 90 bpm</div>
          </div>
          <div class="cols">
            <aside class="insp">
              <div class="who"><span>Bass</span><button class="round small">...</button><button class="round small" aria-label="Back"><svg width="8" height="10"><path d="M8 0 V10 L0 5 Z" fill="#888"/></svg></button></div>
              ${this.field("Input:", "MIDI In 1", plug)}${this.field("Map:", "Triangle II Insert", plug)}${this.field("Preset:", "bass020", presetIconSmall)}
              <div class="list">
                <ul role="listbox" aria-label="Presets">${presets.map((p) => html`<li role="option" class=${p === "bass020" ? "on" : ""} aria-selected=${p === "bass020"}>${presetIcon}<span>${p}</span>${p === "bass020" ? html`<svg width="14" height="14"><path d="M1 4 L5 1 L6 5 L9 6 L8 10 L3 7 Z" fill="#bbb"/><path d="M6 7 L10 12" stroke="#bbb" stroke-width="2"/></svg>` : nothing}</li>`)}</ul>
                <div class="vbar"><b>▲</b><i class="view"></i><span class="fill"></span><b>▼</b></div>
              </div>
              ${this.field("Param:", "", nothing)}${this.field("", "Track Info", nothing, true)}
            </aside>
            <pod-tracks></pod-tracks>
          </div>
        </div>
        <pod-timeline></pod-timeline>
        <div class="rail brushed">
          <div class="vbar"><b>▲</b><i class="view"></i><span class="fill"></span><b>▼</b></div>
          <div class="vzoom"><svg width="12" height="12"><path d="M0 7.500 H6 M3 4 V11" stroke="#111"/><path d="M5 1 H12 M7 3 H12 M9 5 H12" stroke="#666" stroke-dasharray="1 1"/></svg>
            <input type="range" aria-label="Vertical zoom" value="50">
            <svg width="12" height="12"><path d="M0 4.500 H6 M2.500 1 H4 M2.500 7.500 H4" stroke="#111"/><path d="M3 12 L11 4 M6 12 L11 7 M9 12 L11 10" stroke="#555"/></svg></div>
        </div>
      </main>
      <div class="split"></div>
      <pod-mixer></pod-mixer>
      <footer class="transport brushed">
        <button class="key go power" aria-label="Power"><svg width="22" height="24"><path d="M6 7 A8 8 0 1 0 16 7 M11 3 V12" fill="none" stroke="#063806" stroke-width="2"/></svg></button><i class="sep"></i>
        <button class="key" aria-label="Stop"><svg width="16" height="16"><rect width="16" height="16" fill="#666"/></svg></button>
        <button class="key go" aria-label="Play"><svg width="20" height="20"><path d="M1 1 V19 L19 10 Z" fill="#14a010"/></svg></button>
        <button class="key" aria-label="Record"><svg width="20" height="20"><circle cx="10" cy="10" r="9.500" fill="#6a6a6a"/></svg></button>
        <button class="key slim" aria-label="Metronome"><svg width="14" height="20"><path d="M5 0 H9 L13 18 L7 20 L1 18 Z" fill="#555"/><path d="M7 3 V16" stroke="#bbb"/></svg></button>
        <div class="lcd count"><span>1</span><span>3</span><i class="lamp"></i></div>
        <div class="lcd tempo"><span>4/4</span><span>90.00</span></div>
        <button class="round dark" aria-label="Loop"><svg width="22" height="20"><path d="M5 12 Q6 5 12 5 Q18 6 18 11 Q17 17 11 17" fill="none" stroke="#aaa" stroke-width="2.200"/><path d="M0 11 L5 5 L10 11 Z" fill="#ccc"/></svg></button>
        <div class="lcd time"><span>1</span><span>1/4</span><span>0%</span><span>5</span><span>1/4</span><span>0%</span></div>
        <button class="capsule" aria-label="Punch in"><svg width="11" height="24"><path d="M1 1 H10 L9 9 L5.500 14 L2 9 Z" fill="#999"/><circle cx="5.500" cy="20" r="3" fill="#aaa"/></svg></button>
        <button class="capsule" aria-label="Punch out"><svg width="11" height="24"><path d="M5.500 0 L9 4 L10 12 H1 L2 4 Z" fill="#999"/><circle cx="5.500" cy="19" r="3" fill="#aaa"/></svg></button>
        <div class="lcd time"><span>1</span><span>1/4</span><span>0%</span><span>11</span><span>1/4</span><span>0%</span></div>
        <span class="fill"></span>
        <div class="cpu"><span>CPU</span><b>22</b></div><div class="cpu io"><span>I</span><span>O</span></div>
      </footer>
      <div class="foot"><pod-scroll .start=${0} .size=${55}></pod-scroll></div>
      <div class="status"><i></i><i></i></div>
      <pod-curve-window class="float"></pod-curve-window>`;
  }
}
